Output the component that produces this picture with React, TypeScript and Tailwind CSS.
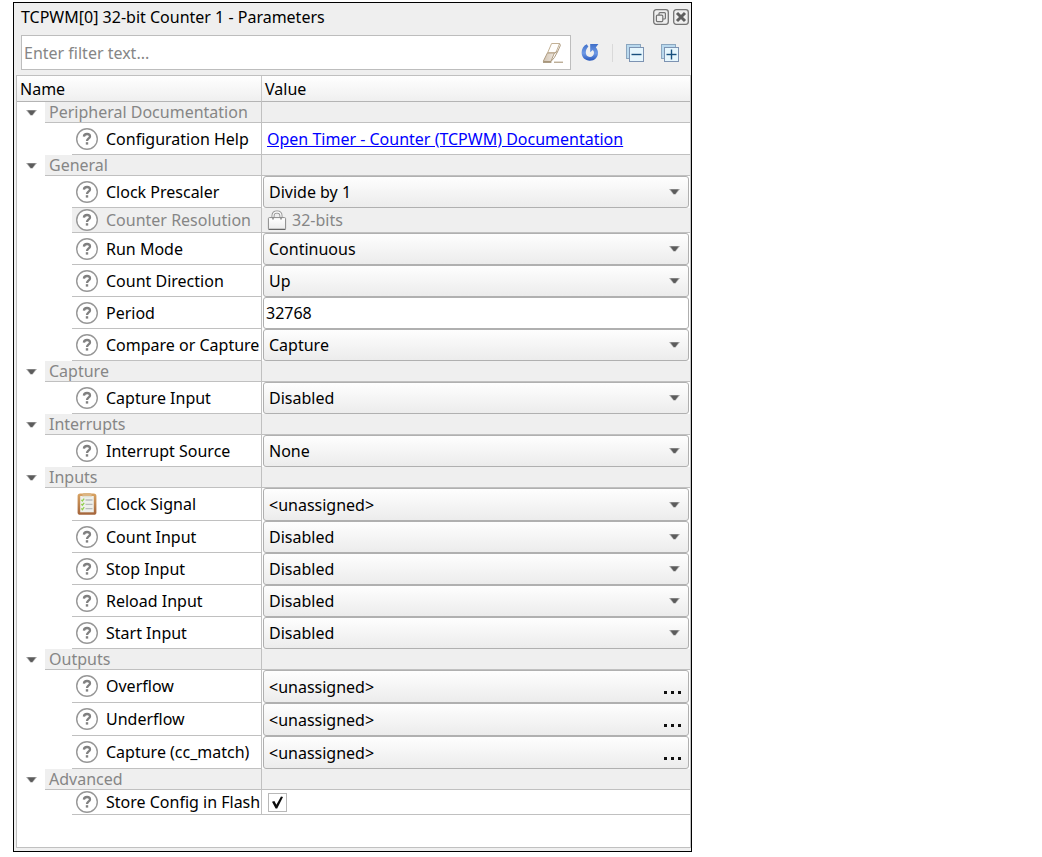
import { useState } from "react";

type Param = {
  label: string;
  kind: "link" | "select" | "readonly" | "text" | "picker" | "check";
  value: string;
  icon?: "clipboard";
};

type Section = { title: string; params: Param[] };

const sections: Section[] = [
  {
    title: "Peripheral Documentation",
    params: [
      { label: "Configuration Help", kind: "link", value: "Open Timer - Counter (TCPWM) Documentation" },
    ],
  },
  {
    title: "General",
    params: [
      { label: "Clock Prescaler", kind: "select", value: "Divide by 1" },
      { label: "Counter Resolution", kind: "readonly", value: "32-bits" },
      { label: "Run Mode", kind: "select", value: "Continuous" },
      { label: "Count Direction", kind: "select", value: "Up" },
      { label: "Period", kind: "text", value: "32768" },
      { label: "Compare or Capture", kind: "select", value: "Capture" },
    ],
  },
  { title: "Capture", params: [{ label: "Capture Input", kind: "select", value: "Disabled" }] },
  { title: "Interrupts", params: [{ label: "Interrupt Source", kind: "select", value: "None" }] },
  {
    title: "Inputs",
    params: [
      { label: "Clock Signal", kind: "select", value: "<unassigned>", icon: "clipboard" },
      { label: "Count Input", kind: "select", value: "Disabled" },
      { label: "Stop Input", kind: "select", value: "Disabled" },
      { label: "Reload Input", kind: "select", value: "Disabled" },
      { label: "Start Input", kind: "select", value: "Disabled" },
    ],
  },
  {
    title: "Outputs",
    params: [
      { label: "Overflow", kind: "picker", value: "<unassigned>" },
      { label: "Underflow", kind: "picker", value: "<unassigned>" },
      { label: "Capture (cc_match)", kind: "picker", value: "<unassigned>" },
    ],
  },
  { title: "Advanced", params: [{ label: "Store Config in Flash", kind: "check", value: "on" }] },
];

const idFor = (label: string) => label.toLowerCase().replace(/[^a-z]+/g, "-");

function rowHeight(p: Param) {
  if (p.icon || p.kind === "picker") return "h-[33px]";
  if (p.kind === "readonly" || p.kind === "check") return "h-[25px]";
  return "h-[32px]";
}

function Triangle() {
  return (
    <svg width="11" height="6" viewBox="0 0 11 6" aria-hidden="true">
      <path d="M0 0H11L6.5 5.5H4.5Z" fill="#a9a9a9" />
      <path d="M1.5 0.6H9.5L6.2 5H4.8Z" fill="#5c5c5c" />
    </svg>
  );
}

function HelpIcon() {
  return (
    <svg width="24" height="24" viewBox="0 0 24 24" fill="none" aria-hidden="true">
      <circle cx="12" cy="12" r="10.3" fill="#fff" stroke="#979797" strokeWidth="1.4" />
      <path
        d="M8.9 9.6C9 7.8 10.2 7 12 7S15 7.9 15 9.4C15 11.3 12 11.5 12 14"
        stroke="#808080"
        strokeWidth="2.3"
      />
      <rect x="10.8" y="15.2" width="2.4" height="2.4" fill="#808080" />
    </svg>
  );
}

function ClipboardIcon() {
  return (
    <svg width="24" height="24" viewBox="0 0 24 24" fill="none" aria-hidden="true">
      <defs>
        <linearGradient id="board" x1="0" y1="0" x2="0" y2="1">
          <stop offset="0" stopColor="#d9a463" />
          <stop offset="1" stopColor="#a4643b" />
        </linearGradient>
      </defs>
      <rect x="2.6" y="1.4" width="18.8" height="21.4" rx="2.6" fill="url(#board)" />
      <path d="M5.2 4H18.8V20.3H5.2Z" fill="#eef0ec" />
      <path d="M7.4 2.8Q7.4 1 9 1H15Q16.6 1 16.6 2.8V4.4H7.4Z" fill="#dcb583" />
      <path d="M8.4 4H15.6V5.4H8.4Z" fill="#dfe2d6" />
      <path
        d="M6.4 7.8 7.4 9 9.2 6.6M6.4 12 7.4 13.2 9.2 10.8M6.4 16.4 7.4 17.6 9.2 15.2"
        stroke="#93cf4f"
        strokeWidth="1.3"
      />
      <path d="M10.5 8H17.5M10.5 12.3H17.5M10.5 16.7H17.5" stroke="#b9bcbd" strokeWidth="1.3" />
    </svg>
  );
}

function LockIcon() {
  return (
    <svg width="20" height="21" viewBox="0 0 20 21" fill="none" aria-hidden="true">
      <defs>
        <linearGradient id="body" x1="0" y1="0" x2="0" y2="1">
          <stop offset="0" stopColor="#ffffff" />
          <stop offset="1" stopColor="#ececec" />
        </linearGradient>
      </defs>
      <path d="M6 10V6C6 3.2 7.4 2 10 2S14 3.2 14 6V10" stroke="#8d8d8d" strokeWidth="3" />
      <path d="M6 10V6C6 3.2 7.4 2 10 2S14 3.2 14 6V10" stroke="#f8f8f8" strokeWidth="1.3" />
      <rect x="1.4" y="7.6" width="17.2" height="11.8" rx="1" fill="url(#body)" stroke="#8a8a8a" strokeWidth="1" />
      <path d="M6 7V9.4M14 7V9.4" stroke="#8d8d8d" strokeWidth="1.6" />
      <path d="M1.6 19.4H18.4" stroke="#666" strokeWidth="1.2" />
    </svg>
  );
}

function EraserIcon() {
  return (
    <svg width="22" height="22" viewBox="0 0 22 22" fill="none" aria-hidden="true">
      <defs>
        <linearGradient id="rubber" x1="0" y1="0" x2="1" y2="0">
          <stop offset="0" stopColor="#d2c4b3" />
          <stop offset="1" stopColor="#efe8df" />
        </linearGradient>
      </defs>
      <path d="M9.6 1.5H17.6L13.8 10.8H5.6Z" fill="#fffefc" stroke="#c3b195" strokeWidth="1" />
      <path d="M5.4 11H12.4L8.8 19.6H1.4V19Z" fill="url(#rubber)" stroke="#b09d82" strokeWidth="1" />
      <path d="M17.6 1.6 18.4 3.4 15.8 9.2 12.4 11M15.8 9.4 12.2 15.8 8.8 19.6" stroke="#b09d82" strokeWidth="1" />
      <path d="M1 20.2H9.4" stroke="#8c7858" strokeWidth="1" />
      <path d="M12 20.2H21" stroke="#a08c6c" strokeWidth="1" />
    </svg>
  );
}

function ResetIcon() {
  return (
    <svg width="18" height="19" viewBox="0 0 18 19" fill="none" aria-hidden="true">
      <defs>
        <linearGradient id="arrow" x1="0" y1="0" x2="0" y2="1">
          <stop offset="0" stopColor="#3f6fc8" />
          <stop offset="0.55" stopColor="#6f9ae6" />
          <stop offset="1" stopColor="#2656bb" />
        </linearGradient>
      </defs>
      <path
        d="M5.8 1.2C2.6 2.6 0.6 5.8 0.6 9.6C0.6 14.4 4.2 17.8 8.8 17.8C13.6 17.8 17 14.4 17 9.8C17 7.6 16.2 5.8 14.8 4.4L17.4 1H9.2V9.2L11.8 7C12.6 7.8 13 8.8 13 9.8C13 12.4 11.2 14 8.9 14C6.4 14 4.8 12.2 4.8 9.6C4.8 7 5.8 5 7.4 3.8Z"
        fill="url(#arrow)"
      />
    </svg>
  );
}

function TreeIcon({ plus }: { plus?: boolean }) {
  return (
    <svg width="18" height="18" viewBox="0 0 18 18" fill="none" aria-hidden="true">
      <rect x="0.5" y="0.5" width="14" height="14" fill="#b9d9ee" stroke="#8ba6bf" />
      <rect x="3.5" y="3.5" width="14" height="14" fill="#e6f6fd" stroke="#7d93b2" />
      <path d="M5.5 10.5H15.5" stroke="#17507e" strokeWidth="1.4" />
      {plus && <path d="M10.5 5.5V15.5" stroke="#17507e" strokeWidth="1.4" />}
    </svg>
  );
}

const comboBox =
  "h-full w-full rounded-[3px] border border-[#b0b0b0] bg-linear-to-b from-[#fefefe] to-[#ececec] pl-[5px] text-left";

function Value({ param }: { param: Param }) {
  const id = idFor(param.label);
  const [checked, setChecked] = useState(true);
  switch (param.kind) {
    case "link":
      return (
        <a id={id} href="#documentation" className="pl-[5px] text-[#0000ff] underline">
          {param.value}
        </a>
      );
    case "readonly":
      return (
        <output id={id} className="flex items-center gap-[5px] pl-[5px] text-[#868686]">
          <LockIcon />
          {param.value}
        </output>
      );
    case "text":
      return (
        <input
          id={id}
          type="text"
          defaultValue={param.value}
          className="h-full w-full rounded-[3px] border border-[#b0b0b0] bg-white pl-[2px]"
        />
      );
    case "check":
      return (
        <span className="relative ml-[6px] flex h-[19px] w-[19px]">
          <input
            id={id}
            type="checkbox"
            checked={checked}
            onChange={() => setChecked(!checked)}
            className="h-full w-full appearance-none border border-[#b8b8b8] bg-white"
          />
          {checked && (
            <svg
              width="19"
              height="19"
              viewBox="0 0 19 19"
              className="pointer-events-none absolute inset-0"
              aria-hidden="true"
            >
              <path d="M4 8.8 6.4 8 8.4 11.8 13 3.6 15 4 9.2 15.4H7.6Z" fill="#0c0c0c" />
            </svg>
          )}
        </span>
      );
    case "picker":
      return (
        <button id={id} type="button" className={`${comboBox} flex items-center justify-between pr-[6px]`}>
          {param.value}
          <svg width="18" height="4" viewBox="0 0 18 4" className="mt-[12px]" aria-hidden="true">
            <path d="M0 0H3V3H0ZM7 0H10V3H7ZM14 0H17V3H14Z" fill="#111" />
          </svg>
        </button>
      );
    default:
      return (
        <span className="relative flex h-full w-full">
          <select id={id} defaultValue={param.value} className={`${comboBox} appearance-none`}>
            <option>{param.value}</option>
          </select>
          <span className="pointer-events-none absolute inset-y-0 right-[9px] flex items-center">
            <Triangle />
          </span>
        </span>
      );
  }
}

function ParamRow({ param }: { param: Param }) {
  const muted = param.kind === "readonly";
  const framed = param.kind === "select" || param.kind === "text" || param.kind === "picker";
  const h = rowHeight(param);
  return (
    <tr>
      <td className="border-r border-[#c0c0c0] p-0">
        <div
          className={`ml-[55px] flex items-center gap-[7px] border-b border-[#c0c0c0] pl-[3px] ${h} ${muted ? "bg-[#efefef] text-[#868686]" : ""}`}
        >
          {param.icon ? <ClipboardIcon /> : <HelpIcon />}
          <label htmlFor={idFor(param.label)} className="whitespace-nowrap">
            {param.label}
          </label>
        </div>
      </td>
      <td className="p-0">
        <div
          className={`flex items-center ${h} ${framed ? "px-px" : "border-b border-[#c0c0c0]"} ${muted ? "bg-[#efefef]" : ""}`}
        >
          <Value param={param} />
        </div>
      </td>
    </tr>
  );
}

function SectionRows({ section }: { section: Section }) {
  const [open, setOpen] = useState(true);
  return (
    <tbody>
      <tr>
        <th scope="rowgroup" className="border-r border-[#c0c0c0] p-0 text-left font-normal">
          <button
            type="button"
            aria-expanded={open}
            onClick={() => setOpen(!open)}
            className="flex h-[21px] w-full items-center text-left text-[#868686]"
          >
            <span className="flex w-[28px] justify-center">
              <Triangle />
            </span>
            <span className="flex h-full flex-1 items-center border-b border-[#c0c0c0] bg-[#efefef] pl-[4px]">
              {section.title}
            </span>
          </button>
        </th>
        <td className="border-b border-[#c0c0c0] bg-[#efefef] p-0" />
      </tr>
      {open && section.params.map((p) => <ParamRow key={p.label} param={p} />)}
    </tbody>
  );
}

export default function App() {
  return (
    <main className="min-h-screen bg-white pt-[2px] pl-[13px] font-['Noto_Sans','Open_Sans',sans-serif] text-[16px] leading-[20px] text-black">
      <section className="w-full max-w-[679px] border border-black bg-[#efefef] pb-[3px] pl-[2px]">
        <header className="flex h-[28px] items-center justify-between pr-[2px] pl-[5px]">
          <h1>TCPWM[0] 32-bit Counter 1 - Parameters</h1>
          <div className="flex gap-[4px]">
            <button type="button" aria-label="Float panel">
              <svg width="16" height="16" viewBox="0 0 16 16" fill="none" aria-hidden="true">
                <rect x="0.7" y="0.7" width="14.6" height="14.6" rx="2.5" stroke="#747474" strokeWidth="1.3" />
                <rect x="6" y="3.6" width="6.4" height="6.4" rx="1" stroke="#747474" strokeWidth="1.2" />
                <rect x="3.4" y="6.2" width="6.4" height="6.4" rx="1" fill="#efefef" stroke="#747474" strokeWidth="1.2" />
              </svg>
            </button>
            <button type="button" aria-label="Close panel">
              <svg width="16" height="16" viewBox="0 0 16 16" fill="none" aria-hidden="true">
                <rect x="0.7" y="0.7" width="14.6" height="14.6" rx="2.5" stroke="#747474" strokeWidth="1.3" />
                <path d="M4 4 12 12M12 4 4 12" stroke="#5f5f5f" strokeWidth="3" />
              </svg>
            </button>
          </div>
        </header>
        <div className="flex items-center pt-[4px] pr-[12px] pb-[5px] pl-[5px]">
          <div className="flex h-[35px] flex-1 items-center border border-[#bdbdbd] bg-white pr-[6px]">
            <input
              type="text"
              aria-label="Filter"
              placeholder="Enter filter text..."
              className="h-full min-w-0 flex-1 pl-[2px] outline-none placeholder:text-[#868686]"
            />
            <button type="button" aria-label="Clear filter">
              <EraserIcon />
            </button>
          </div>
          <button type="button" aria-label="Reset" className="ml-[10px]">
            <ResetIcon />
          </button>
          <span className="mx-[13px] h-[18px] w-px bg-[#d9d9d9]" />
          <div className="flex gap-[17px]">
            <button type="button" aria-label="Collapse all">
              <TreeIcon />
            </button>
            <button type="button" aria-label="Expand all">
              <TreeIcon plus />
            </button>
          </div>
        </div>
        <div className="border border-[#c0c0c0] bg-white pb-[32px]">
          <table className="w-full table-fixed border-separate border-spacing-0">
            <colgroup>
              <col className="w-[245px]" />
              <col />
            </colgroup>
            <thead>
              <tr className="h-[26px] text-left">
                <th className="border-r border-b border-[#b4b4b4] border-r-[#c8c8c8] bg-linear-to-b from-white to-[#efefef] p-0 pl-[3px] font-normal">
                  Name
                </th>
                <th className="border-b border-[#b4b4b4] bg-linear-to-b from-white to-[#efefef] p-0 pl-[3px] font-normal">
                  Value
                </th>
              </tr>
            </thead>
            {sections.map((s) => (
              <SectionRows key={s.title} section={s} />
            ))}
          </table>
        </div>
      </section>
    </main>
  );
}
